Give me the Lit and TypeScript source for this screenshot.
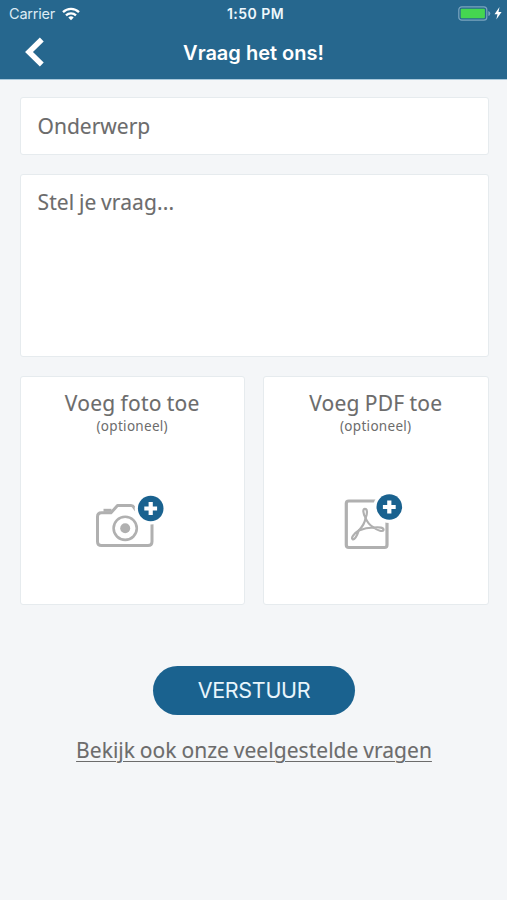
import { LitElement, html, css, svg } from "lit";
import { customElement, property } from "lit/decorators.js";

const plusBadge = (cx: number, cy: number) => svg`
  <circle cx=${cx} cy=${cy} r="16" fill="#fff" stroke="none"/>
  <circle cx=${cx} cy=${cy} r="12.8" fill="#1a628f" stroke="none"/>
  <path d="M${cx - 6.4} ${cy}h12.8M${cx} ${cy - 6.4}v12.8" stroke="#fff" stroke-width="4.2" fill="none"/>`;

const camera = html`<svg width="80" height="70" viewBox="0 0 80 70" fill="none" stroke="#b0b0b0" stroke-width="3">
  <path stroke-linejoin="round" d="M9.500 22.800H19L25.500 15.500H39Q41 15.500 42 17.500L46 22.800H56Q60 22.800 60 26.800V51.500Q60 55.500 56 55.500H9.500Q5.500 55.500 5.500 51.500V26.800Q5.500 22.800 9.500 22.800Z"/>
  <path d="M11.500 20.300h8" stroke-width="3"/>
  <circle cx="33.200" cy="38.300" r="11.600" stroke-width="2.600"/>
  <circle cx="33.200" cy="38.300" r="5" fill="#b0b0b0" stroke="none"/>
  ${plusBadge(58.7, 18.5)}
</svg>`;

const pdf = html`<svg width="80" height="70" viewBox="0 0 80 70" fill="none" stroke="#b0b0b0" stroke-width="3.200">
  <rect x="10.300" y="11" width="40.700" height="46.500" rx="2.500"/>
  <g stroke-width="2.200" stroke-linejoin="round" stroke-linecap="round">
    <path d="M29.600 28C27 23.500 26.500 18.800 29 18.800S31.500 23.500 29.600 28"/>
    <path d="M29.600 28C29 32.500 26.500 36.500 22.800 40.500M29.600 28C31 32 33.500 35 37.700 37.500"/>
    <path d="M22.800 40.500C18 43.500 15 47.500 16.500 49C18.500 50.500 21.200 45.500 22.800 40.500C28 38.300 32.500 37.500 37.700 37.500C42 41 46.800 41.800 47.500 40C48 37.800 43.500 36.800 37.700 37.500"/>
  </g>
  ${plusBadge(53.3, 17)}
</svg>`;

@customElement("status-bar")
class StatusBar extends LitElement {
  static styles = css`
    :host { display: grid; grid-template-columns: 1fr auto 1fr; align-items: center; height: 27px; padding: 0 5px 0 9px; color: #fff; font: 14.500px/27px Inter, sans-serif; }
    .left { display: flex; align-items: center; gap: 7px; color: #dcebf4; letter-spacing: -0.200px; }
    .time { font-weight: 600; font-size: 14px; letter-spacing: 0.450px; color: #eef7fc; }
    .right { display: flex; align-items: center; justify-content: flex-end; gap: 3px; }
    svg { display: block; }
  `;
  render() {
    return html`
      <div class="left"><span>Carrier</span>
        <svg width="18" height="14" viewBox="0 0 18 14" fill="none" stroke="#fff" stroke-width="2.300">
          <path d="M1 5.200a11.500 11.500 0 0 1 16 0M4 8.400a7.200 7.200 0 0 1 10 0"/>
          <path d="M6.300 10.600a4 4 0 0 1 5.400 0L9 13.300z" fill="#fff" stroke="none"/>
        </svg>
      </div>
      <div class="time">1:50 PM</div>
      <div class="right">
        <svg width="33" height="15" viewBox="0 0 33 15">
          <rect x=".8" y=".8" width="28" height="13.400" rx="3" fill="none" stroke="#7ba5bf" stroke-width="1.200"/>
          <rect x="2.700" y="2.700" width="24.200" height="9.600" rx="1" fill="#45d650"/>
          <path d="M30.300 5q2 .5 2 2.500t-2 2.500z" fill="#7ba5bf"/>
        </svg>
        <svg width="8" height="13" viewBox="0 0 8 13"><path d="M5.500 0 .5 7.300h3L2.300 12.500 7.600 5H4.500z" fill="#fff"/></svg>
      </div>`;
  }
}

@customElement("attach-card")
class AttachCard extends LitElement {
  @property() label = "";
  @property() kind = "photo";
  static styles = css`
    :host { display: flex; flex-direction: column; align-items: center; box-sizing: border-box; height: 229px; padding-top: 11px; background: #fff; border: 1px solid #e6ebee; border-radius: 3px; color: #6c6c6c; }
    .label { font: 21px/30px "Noto Sans", sans-serif; letter-spacing: 0.250px; word-spacing: -0.700px; white-space: nowrap; -webkit-text-stroke: 0.100px #6c6c6c; }
    .hint { font: 13.500px/16px "Noto Sans", sans-serif; letter-spacing: 0.300px; }
    .icon { margin-top: 56px; width: 80px; height: 70px; }
    svg { display: block; }
  `;
  render() {
    return html`<div class="label">${this.label}</div>
      <div class="hint">(optioneel)</div>
      <div class="icon">${this.kind === "photo" ? camera : pdf}</div>`;
  }
}

@customElement("app-root")
class AppRoot extends LitElement {
  static styles = css`
    :host { display: block; height: 900px; background: #f4f6f8; overflow: hidden; color: #6c6c6c; font-family: "Noto Sans", sans-serif; }
    header { height: 80px; background: #26678e; border-bottom: 1px solid #a9c9dc; box-sizing: border-box; }
    .nav { display: grid; grid-template-columns: 60px 1fr 60px; align-items: center; height: 50px; }
    .back { display: block; margin-left: 23px; }
    h1 { margin: 0; padding-top: 2px; text-align: center; color: #fff; font: 600 20px/48px Inter, sans-serif; }
    main { display: flex; flex-direction: column; padding: 17px 18.500px 0 19.500px; }
    .field { box-sizing: border-box; background: #fff; border: 1px solid #e6ebee; border-radius: 3px; padding: 0 17px; font-size: 21px; -webkit-text-stroke: 0.100px #6c6c6c; }
    .subject { height: 58px; line-height: 56px; }
    .question { height: 183px; margin-top: 19px; line-height: 55px; letter-spacing: 0.120px; word-spacing: -1px; }
    .cards { display: grid; grid-template-columns: 1fr 1fr; gap: 18px; margin-top: 19px; }
    .send { align-self: center; width: 202px; height: 49px; margin-top: 61px; padding: 0; border: 0; border-radius: 25px; background: #1a628f; color: #e8f5fc; font: 21.500px/49px Inter, sans-serif; letter-spacing: -0.300px; }
    .faq { align-self: center; margin-top: 20px; font-size: 21px; line-height: 30px; white-space: nowrap; letter-spacing: 0.040px; word-spacing: -0.700px; text-decoration: underline; text-decoration-thickness: 1.300px; text-underline-offset: 3px; -webkit-text-stroke: 0.100px #6c6c6c; }
  `;
  render() {
    return html`
      <header>
        <status-bar></status-bar>
        <div class="nav">
          <svg class="back" width="24" height="32" viewBox="0 0 24 32" fill="none" stroke="#fff" stroke-width="5.500"><path d="M18.800 3.500 6 16l12.800 12.500"/></svg>
          <h1>Vraag het ons!</h1>
        </div>
      </header>
      <main>
        <div class="field subject">Onderwerp</div>
        <div class="field question">Stel je vraag...</div>
        <div class="cards">
          <attach-card label="Voeg foto toe" kind="photo"></attach-card>
          <attach-card label="Voeg PDF toe" kind="pdf"></attach-card>
        </div>
        <button class="send">VERSTUUR</button>
        <a class="faq">Bekijk ook onze veelgestelde vragen</a>
      </main>`;
  }
}
